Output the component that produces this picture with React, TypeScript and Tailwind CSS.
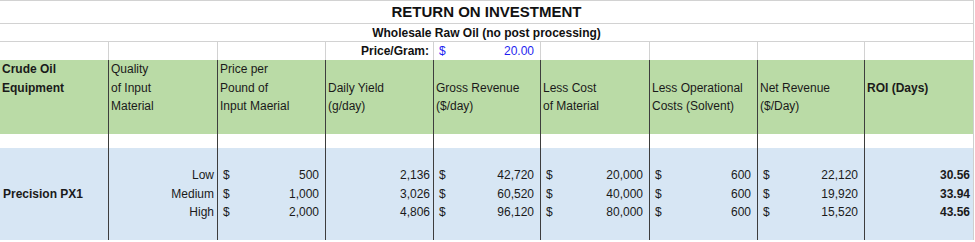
import React from "react";

const widths = [
  "w-[109px]",
  "w-[109px]",
  "w-[108px]",
  "w-[108px]",
  "w-[107px]",
  "w-[109px]",
  "w-[108px]",
  "w-[107px]",
  "w-[109px]",
];

const headers: { lines: string[]; bold?: boolean }[] = [
  { lines: ["Crude Oil", "Equipment", ""], bold: true },
  { lines: ["Quality", "of Input", "Material"] },
  { lines: ["Price per", "Pound of", "Input Maerial"] },
  { lines: ["", "Daily Yield", "(g/day)"] },
  { lines: ["", "Gross Revenue", "($/day)"] },
  { lines: ["", "Less Cost", "of Material"] },
  { lines: ["", "Less Operational", "Costs (Solvent)"] },
  { lines: ["", "Net Revenue", "($/Day)"] },
  { lines: ["", "ROI (Days)", ""], bold: true },
];

type DataCol =
  | { kind: "label"; text: string }
  | { kind: "right"; values: string[]; bold?: boolean }
  | { kind: "money"; values: string[] };

const data: DataCol[] = [
  { kind: "label", text: "Precision PX1" },
  { kind: "right", values: ["Low", "Medium", "High"] },
  { kind: "money", values: ["500", "1,000", "2,000"] },
  { kind: "right", values: ["2,136", "3,026", "4,806"] },
  { kind: "money", values: ["42,720", "60,520", "96,120"] },
  { kind: "money", values: ["20,000", "40,000", "80,000"] },
  { kind: "money", values: ["600", "600", "600"] },
  { kind: "money", values: ["22,120", "19,920", "15,520"] },
  { kind: "right", values: ["30.56", "33.94", "43.56"], bold: true },
];

function border(i: number) {
  return i === 8 ? "border-r border-r-[#cfcfcf]" : "border-r border-r-[#3d3d3d]";
}

export default function App() {
  return (
    <div className="w-[975px] h-[242px] bg-white font-['Liberation_Sans',Arial,sans-serif] text-[12px] text-[#1a1a1a]">
      <div className="w-[974px] border-t border-t-[#d2d2d2]">
        {/* Title */}
        <div className="h-[23px] flex items-center justify-center border-b border-b-[#d2d2d2] border-r border-r-[#d2d2d2]">
          <span className="text-[15px] font-bold text-[#111]">RETURN ON INVESTMENT</span>
        </div>
        {/* Subtitle */}
        <div className="h-[18px] flex items-center justify-center border-b border-b-[#d2d2d2] border-r border-r-[#d2d2d2]">
          <span className="font-bold text-[#111]">Wholesale Raw Oil (no post processing)</span>
        </div>
        {/* Price/Gram row */}
        <div className="flex h-[18px]">
          {widths.map((w, i) => (
            <div key={i} className={`${w} h-full border-r border-r-[#d2d2d2] flex items-center`}>
              {i === 3 && (
                <span className="ml-auto pr-[4px] font-bold text-[#111]">Price/Gram:</span>
              )}
              {i === 4 && (
                <div className="flex w-full justify-between pl-[5px] pr-[6px] text-[#1f1ff0]">
                  <span>$</span>
                  <span>20.00</span>
                </div>
              )}
            </div>
          ))}
        </div>
        {/* Green header */}
        <div className="flex h-[74px] bg-[#badba6]">
          {headers.map((h, i) => (
            <div key={i} className={`${widths[i]} h-full ${border(i)} pl-[2px] leading-[18.5px] ${h.bold ? "font-bold" : ""}`}>
              {h.lines.map((l, j) => (
                <div key={j} className="h-[18.5px] whitespace-nowrap">
                  {l || "\u00a0"}
                </div>
              ))}
            </div>
          ))}
        </div>
        {/* White spacer */}
        <div className="flex h-[14px] bg-white">
          {widths.map((w, i) => (
            <div key={i} className={`${w} h-full ${border(i)}`} />
          ))}
        </div>
        {/* Blue data */}
        <div className="flex h-[92px] bg-[#d7e6f4]">
          {data.map((c, i) => (
            <div key={i} className={`${widths[i]} h-full ${border(i)} flex items-center leading-[18.5px]`}>
              {c.kind === "label" && (
                <span className="pl-[3px] font-bold">{c.text}</span>
              )}
              {c.kind === "right" && (
                <div className={`w-full flex flex-col items-end pr-[3px] ${c.bold ? "font-bold" : ""}`}>
                  {c.values.map((v, j) => (
                    <span key={j}>{v}</span>
                  ))}
                </div>
              )}
              {c.kind === "money" && (
                <div className="w-full flex flex-col pl-[5px] pr-[6px]">
                  {c.values.map((v, j) => (
                    <div key={j} className="flex justify-between">
                      <span>$</span>
                      <span>{v}</span>
                    </div>
                  ))}
                </div>
              )}
            </div>
          ))}
        </div>
      </div>
    </div>
  );
}
